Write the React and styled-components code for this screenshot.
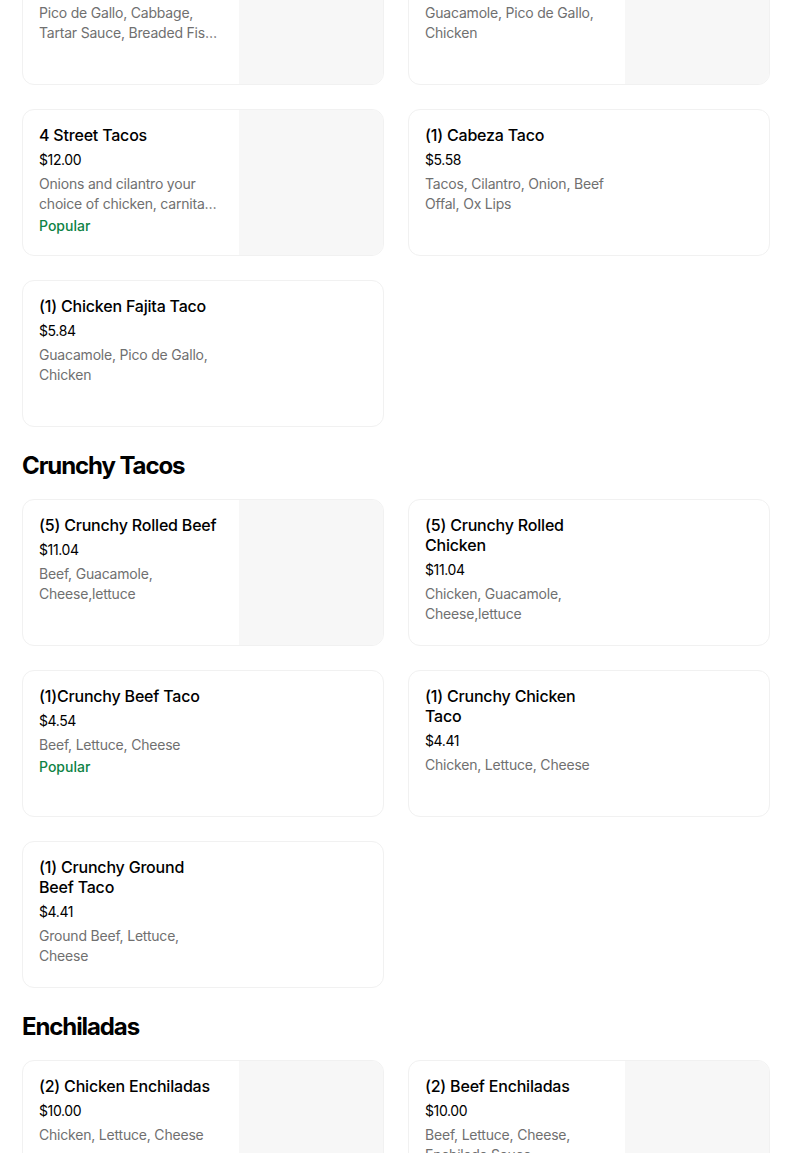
import React from 'react';
import styled, { createGlobalStyle } from 'styled-components';

const GlobalStyle = createGlobalStyle`
	body {
		margin: 0;
		background: #ffffff;
		font-family: Inter, 'Noto Sans', sans-serif;
		color: #000000;
	}
`;

const sections = [
	{
		title: null,
		items: [
			{
				name: '(1) Fish Taco',
				price: '$5.58',
				desc: 'Pico de Gallo, Cabbage, Tartar Sauce, Breaded Fish, Corn Tortilla',
				image: true,
			},
			{
				name: '(1) Chicken Taco',
				price: '$5.58',
				desc: 'Guacamole, Pico de Gallo, Chicken',
				image: true,
			},
			{
				name: '4 Street Tacos',
				price: '$12.00',
				desc: 'Onions and cilantro your choice of chicken, carnitas, asada or pastor',
				popular: true,
				image: true,
			},
			{
				name: '(1) Cabeza Taco',
				price: '$5.58',
				desc: 'Tacos, Cilantro, Onion, Beef Offal, Ox Lips',
			},
			{
				name: '(1) Chicken Fajita Taco',
				price: '$5.84',
				desc: 'Guacamole, Pico de Gallo, Chicken',
			},
		],
	},
	{
		title: 'Crunchy Tacos',
		items: [
			{
				name: '(5) Crunchy Rolled Beef',
				price: '$11.04',
				desc: 'Beef, Guacamole, Cheese,lettuce',
				image: true,
			},
			{
				name: '(5) Crunchy Rolled Chicken',
				price: '$11.04',
				desc: 'Chicken, Guacamole, Cheese,lettuce',
			},
			{
				name: '(1)Crunchy Beef Taco',
				price: '$4.54',
				desc: 'Beef, Lettuce, Cheese',
				popular: true,
			},
			{
				name: '(1) Crunchy Chicken Taco',
				price: '$4.41',
				desc: 'Chicken, Lettuce, Cheese',
			},
			{
				name: '(1) Crunchy Ground Beef Taco',
				price: '$4.41',
				desc: 'Ground Beef, Lettuce, Cheese',
			},
		],
	},
	{
		title: 'Enchiladas',
		items: [
			{
				name: '(2) Chicken Enchiladas',
				price: '$10.00',
				desc: 'Chicken, Lettuce, Cheese',
				image: true,
			},
			{
				name: '(2) Beef Enchiladas',
				price: '$10.00',
				desc: 'Beef, Lettuce, Cheese, Enchilada Sauce',
				image: true,
			},
		],
	},
];

const MenuCard = ({ item }) => (
	<Card>
		<Info>
			<Name>{item.name}</Name>
			<Price>{item.price}</Price>
			<Desc>{item.desc}</Desc>
			{item.popular && <Popular>Popular</Popular>}
		</Info>
		{item.image && <Thumb />}
	</Card>
);

const App = () => {
	return (
		<Page>
			<GlobalStyle />
			{sections.map((s, i) => (
				<Section key={i}>
					{s.title && <Heading>{s.title}</Heading>}
					<Grid>
						{s.items.map((item) => (
							<MenuCard key={item.name} item={item} />
						))}
					</Grid>
				</Section>
			))}
		</Page>
	);
};

const Page = styled.div`
	padding: 0 34px 0 22px;
	margin-top: -62px;
	display: flex;
	flex-direction: column;
	gap: 25px;
`;

const Section = styled.section`
	display: flex;
	flex-direction: column;
	gap: 19px;
`;

const Heading = styled.h2`
	margin: 0;
	font-size: 24px;
	line-height: 28px;
	font-weight: 700;
	letter-spacing: -1.1px;
`;

const Grid = styled.div`
	display: grid;
	grid-template-columns: 362px 362px;
	column-gap: 24px;
	row-gap: 24px;
`;

const Card = styled.div`
	display: flex;
	height: 147px;
	box-sizing: border-box;
	border: 1px solid #f1f1f1;
	border-radius: 12px;
	overflow: hidden;
	background: #ffffff;
`;

const Info = styled.div`
	width: 184px;
	flex-shrink: 0;
	padding: 15px 16px 16px 16px;
	display: flex;
	flex-direction: column;
`;

const Name = styled.div`
	max-width: 180px;
	font-size: 16px;
	line-height: 20px;
	font-weight: 500;
	letter-spacing: -0.2px;
	color: #000000;
`;

const Price = styled.div`
	margin-top: 5px;
	font-size: 14px;
	line-height: 20px;
	letter-spacing: -0.4px;
	color: #000000;
`;

const Desc = styled.div`
	margin-top: 4px;
	font-size: 14px;
	line-height: 20px;
	letter-spacing: -0.2px;
	color: #707070;
	display: -webkit-box;
	-webkit-line-clamp: 2;
	-webkit-box-orient: vertical;
	overflow: hidden;
`;

const Popular = styled.div`
	margin-top: 2px;
	font-size: 14px;
	line-height: 20px;
	font-weight: 500;
	color: #0e8345;
`;

const Thumb = styled.div`
	flex: 1;
	background: #f7f7f7;
`;

export default App;
